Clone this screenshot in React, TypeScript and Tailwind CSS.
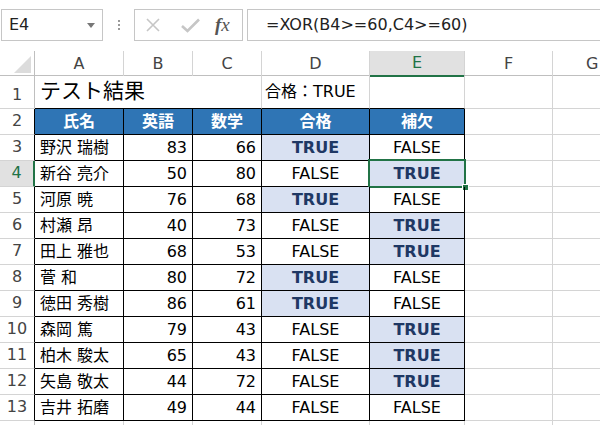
import React from "react";

const FONT = { fontFamily: '"DejaVu Sans", "Noto Sans CJK JP", sans-serif' };

type Row = [string, number, number, boolean, boolean];
const rows: Row[] = [
  ["野沢 瑞樹", 83, 66, true, false],
  ["新谷 亮介", 50, 80, false, true],
  ["河原 暁", 76, 68, true, false],
  ["村瀬 昂", 40, 73, false, true],
  ["田上 雅也", 68, 53, false, true],
  ["菅 和", 80, 72, true, false],
  ["徳田 秀樹", 86, 61, true, false],
  ["森岡 篤", 79, 43, false, true],
  ["柏木 駿太", 65, 43, false, true],
  ["矢島 敬太", 44, 72, false, true],
  ["吉井 拓磨", 49, 44, false, false],
];

const COLS = "grid grid-cols-[35px_89px_69px_69px_108px_95px_88px_1fr]";

function RowHead({ n, active, table }: { n: number | string; active?: boolean; table?: boolean }) {
  if (active) {
    return (
      <div className="flex items-end justify-center pb-[1px] bg-[#e1e1e1] text-[#217346] border-b border-b-[#d4d4d4] border-r-2 border-r-[#217346] text-[16px]">
        {n}
      </div>
    );
  }
  return (
    <div
      className={`flex items-end justify-center pb-[1px] text-[#444] border-b border-b-[#d4d4d4] border-r text-[16px] ${
        table ? "border-r-black" : "border-r-[#bfbfbf]"
      }`}
    >
      {n}
    </div>
  );
}

function BoolCell({ v, selected }: { v: boolean; selected?: boolean }) {
  return (
    <div
      className={`relative flex items-center justify-center border-r border-b border-black text-[16px] ${
        v ? "bg-[#d9e1f2] font-bold text-[#1f3864]" : "text-black"
      }`}
    >
      {v ? "TRUE" : "FALSE"}
      {selected && (
        <>
          <div className="absolute left-[-2px] top-[-2px] right-[-2px] bottom-[-2px] border-2 border-[#217346]" />
          <div className="absolute right-[-5px] bottom-[-5px] w-[7px] h-[7px] bg-[#217346] border border-white" />
        </>
      )}
    </div>
  );
}

export default function App() {
  return (
    <div className="w-[600px] h-[425px] overflow-hidden bg-white text-black" style={FONT}>
      {/* formula bar */}
      <div className="flex items-start h-[51px] pt-[9px]">
        <div className="ml-[1px] w-[102px] h-[32px] border border-[#c6c6c6] flex items-center justify-between pl-[7px] pr-[7px] text-[16px] text-[#222]">
          <span>E4</span>
          <svg width="8" height="5" viewBox="0 0 8 5">
            <path d="M0 0 L8 0 L4 5 Z" fill="#777" />
          </svg>
        </div>
        <div className="w-[31px] h-[32px] flex flex-col items-center justify-center gap-[2px]">
          <div className="w-[2px] h-[2px] bg-[#9a9a9a]" />
          <div className="w-[2px] h-[2px] bg-[#9a9a9a]" />
          <div className="w-[2px] h-[2px] bg-[#9a9a9a]" />
        </div>
        <div className="w-[109px] h-[32px] border border-[#c6c6c6] flex items-center pl-[10px]">
          <svg width="16" height="16" viewBox="0 0 16 16">
            <path d="M2 2 L14 14 M14 2 L2 14" stroke="#c6c6c6" strokeWidth="1.6" />
          </svg>
          <svg className="ml-[20px]" width="19" height="15" viewBox="0 0 19 15">
            <path d="M1 8 L6.5 13 L18 1.5" stroke="#c6c6c6" strokeWidth="2.6" fill="none" />
          </svg>
          <span
            className="ml-[15px] text-[19px] italic text-[#555]"
            style={{ fontFamily: '"Liberation Serif", "DejaVu Serif", serif' }}
          >
            <span className="font-bold">f</span>x
          </span>
        </div>
        <div className="ml-[4px] flex-1 h-[32px] border border-r-0 border-[#c6c6c6] flex items-center pl-[18px] text-[16px] text-[#222]">
          =XOR(B4&gt;=60,C4&gt;=60)
        </div>
      </div>

      {/* column headers */}
      <div className={`${COLS} h-[25px] border-b border-[#bfbfbf] text-[16px] text-[#444]`}>
        <div className="relative border-r border-[#bfbfbf]">
          <svg className="absolute right-[3px] bottom-[3px]" width="17" height="17" viewBox="0 0 17 17">
            <path d="M17 0 L17 17 L0 17 Z" fill="#dcdcdc" />
          </svg>
        </div>
        {["A", "B", "C", "D"].map((c) => (
          <div key={c} className="flex items-center justify-center border-r border-[#d4d4d4]">
            {c}
          </div>
        ))}
        <div className="flex items-center justify-center bg-[#e1e1e1] text-[#217346] border-r border-[#d4d4d4] border-b-2 border-b-[#217346] mb-[-1px]">
          E
        </div>
        <div className="flex items-center justify-center border-r border-[#d4d4d4]">F</div>
        <div className="flex items-center justify-start pl-[33px]">G</div>
      </div>

      {/* row 1 */}
      <div className={`${COLS} h-[33px]`}>
        <RowHead n={1} />
        <div className="col-span-2 flex items-center border-b border-black pl-[5px] text-[21px] whitespace-nowrap">
          <div className="whitespace-nowrap">テスト結果</div>
        </div>
        <div className="border-r border-[#d4d4d4] border-b border-b-black" />
        <div className="flex items-center pl-[3px] border-r border-[#d4d4d4] border-b border-b-black text-[16px] whitespace-nowrap">
          合格：TRUE
        </div>
        <div className="border-r border-[#d4d4d4] border-b border-b-black" />
        <div className="border-r border-b border-[#d4d4d4]" />
        <div className="border-b border-[#d4d4d4]" />
      </div>

      {/* row 2 header */}
      <div className={`${COLS} h-[26px]`}>
        <RowHead n={2} table />
        {["氏名", "英語", "数学", "合格", "補欠"].map((h) => (
          <div
            key={h}
            className="flex items-center justify-center bg-[#2f75b5] text-white font-bold text-[16px] border-r border-b border-black"
          >
            {h}
          </div>
        ))}
        <div className="border-r border-b border-[#d4d4d4]" />
        <div className="border-b border-[#d4d4d4]" />
      </div>

      {rows.map((r, i) => {
        const n = i + 3;
        const active = n === 4;
        return (
          <div key={n} className={`${COLS} h-[26px]`}>
            <RowHead n={n} active={active} table />
            <div className="flex items-center pl-[5px] border-r border-b border-black text-[16px] whitespace-nowrap">
              {r[0]}
            </div>
            <div className="flex items-center justify-end pr-[5px] border-r border-b border-black text-[16px]">
              {r[1]}
            </div>
            <div className="flex items-center justify-end pr-[5px] border-r border-b border-black text-[16px]">
              {r[2]}
            </div>
            <BoolCell v={r[3]} />
            <BoolCell v={r[4]} selected={active} />
            <div className="border-r border-b border-[#d4d4d4]" />
            <div className="border-b border-[#d4d4d4]" />
          </div>
        );
      })}

      {/* row 14 partial */}
      <div className={`${COLS} h-[26px]`}>
        <div className="border-r border-[#bfbfbf]" />
        <div className="border-r border-[#d4d4d4]" />
        <div className="border-r border-[#d4d4d4]" />
        <div className="border-r border-[#d4d4d4]" />
        <div className="border-r border-[#d4d4d4]" />
        <div className="border-r border-[#d4d4d4]" />
        <div className="border-r border-[#d4d4d4]" />
        <div />
      </div>
    </div>
  );
}
